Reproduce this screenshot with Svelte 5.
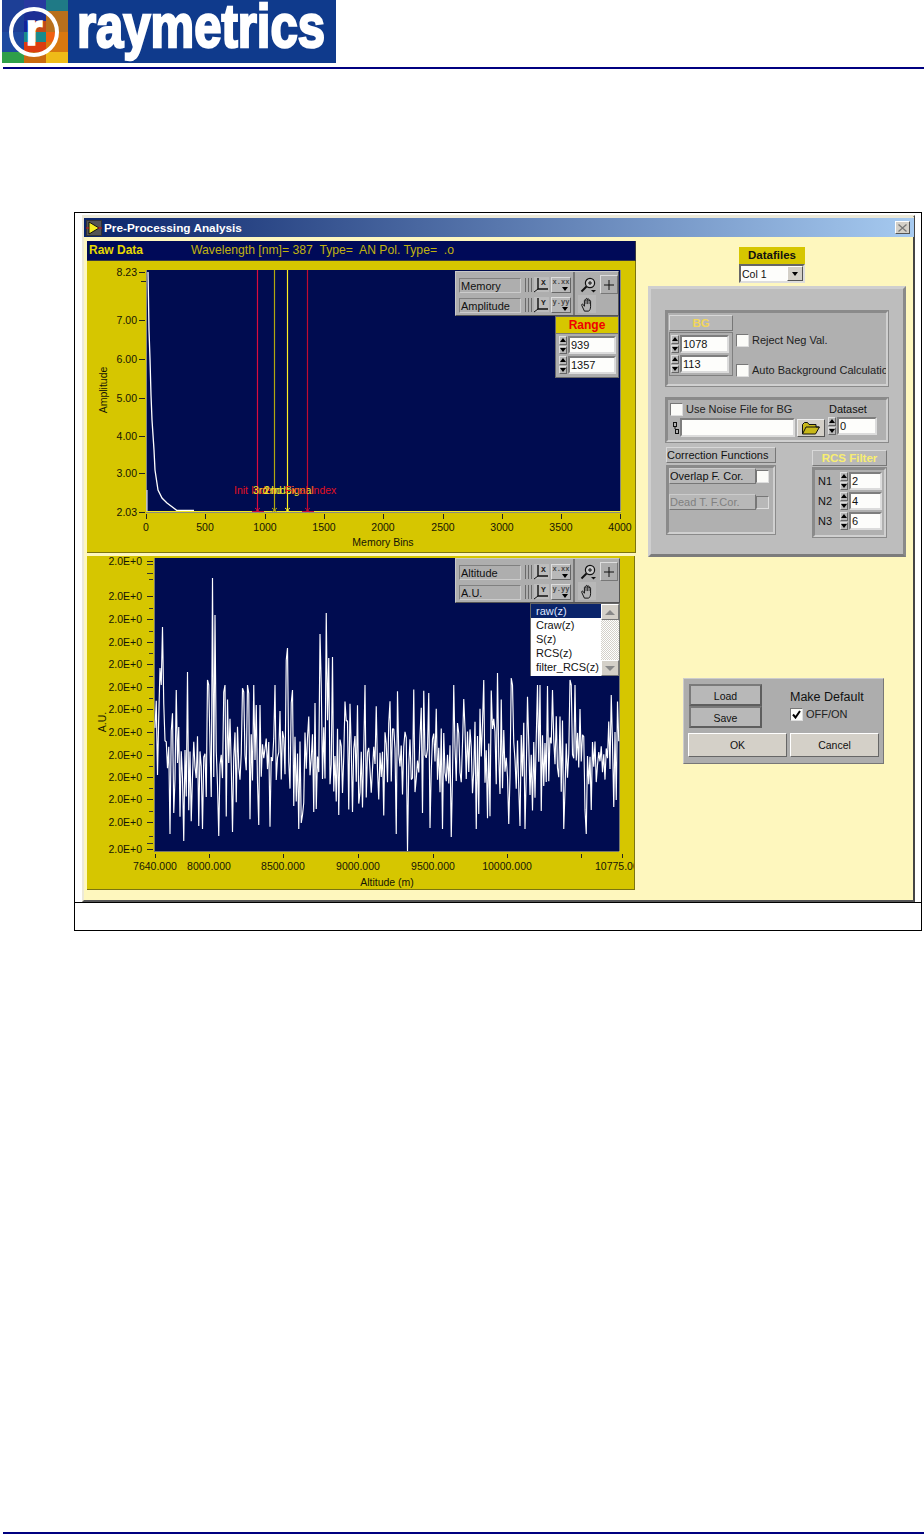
<script>
  // seeded so the noise trace is the same on every load
  function prng(seed) {
    let a = seed;
    return () => {
      a = (a + 0x6d2b79f5) | 0;
      let t = Math.imul(a ^ (a >>> 15), 1 | a);
      t = (t + Math.imul(t ^ (t >>> 7), 61 | t)) ^ t;
      return ((t ^ (t >>> 14)) >>> 0) / 4294967296;
    };
  }

  const logoTiles = [
    [2, 0, '#1d3f96'], [24, 0, '#27399f'], [46, 0, '#1f7a86'],
    [2, 11, '#1d3f96'], [24, 11, '#1c2f94'], [46, 11, '#b9701c'],
    [2, 32, '#1e4aa0'], [24, 32, '#1a8a8a'], [46, 32, '#d8780f'],
    [2, 52, '#2f9f4a'], [24, 52, '#c96a10'], [46, 52, '#efbb18']
  ];

  const plot1Y = [
    ['8.23', 272], ['7.00', 320], ['6.00', 359], ['5.00', 398], ['4.00', 436], ['3.00', 473], ['2.03', 512]
  ];
  const plot1X = [
    ['0', 146], ['500', 205], ['1000', 265], ['1500', 324], ['2000', 383],
    ['2500', 443], ['3000', 502], ['3500', 561], ['4000', 620]
  ];
  const cursors = [
    [257, '#d80c3c'], [274, '#b0a810'], [287, '#fff020'], [307, '#c00a30']
  ];
  const cursorLabels = [
    ['Init Index', 234, '#e01020'], ['3rd Index', 253, '#f4e820'],
    ['2nd Signal', 264, '#f4e820'], ['Final Index', 285, '#e01020']
  ];

  const plot2Y = [561, 596, 619, 642, 664, 687, 709, 732, 755, 777, 799, 822, 849];
  const plot2X = [
    ['7640.000', 155], ['8000.000', 209], ['8500.000', 283], ['9000.000', 358],
    ['9500.000', 433], ['10000.000', 507], ['', 581], ['10775.000', 622]
  ];

  // [x, y] of the tall excursions read off the reference, the rest is noise
  const spikes = [
    [163, 627], [160, 668], [170, 834], [176, 690], [184, 841], [187, 672], [199, 826], [203, 829],
    [207, 680], [212, 578], [213, 561], [215, 615], [219, 836], [224, 692], [233, 832], [244, 692],
    [259, 825], [286, 660], [288, 648], [293, 690], [301, 823], [303, 815], [320, 634], [326, 613],
    [329, 658], [333, 657], [339, 815], [353, 812], [396, 834], [407, 851], [430, 828], [451, 837],
    [464, 699], [484, 680], [497, 673], [509, 824], [520, 826], [511, 678], [553, 690], [586, 834],
    [570, 680], [611, 695], [616, 800]
  ];

  const rand = prng(48271);
  const trace2 = [];
  let side = 1;
  for (let x = 155; x < 619; x += 1.25) {
    const hit = spikes.find((s) => Math.abs(s[0] - x) < 0.65);
    // the signal flips around its mean nearly every sample, with long tails
    side = rand() < 0.75 ? -side : side;
    const y = 757 + side * Math.min(-Math.log(1 - rand() * 0.96) * 30, 72);
    trace2.push(`${x.toFixed(2)},${(hit ? hit[1] : y).toFixed(1)}`);
  }

  // steep decay of the raw signal on the memory-bins plot
  const trace1 = '148,272 148.500,300 149,330 150,359 151,395 152,420 154,450 155,470 158,490 162,498 167,503 177,510.500 194,510.500';
</script>

{#snippet spinner()}
  <span class="spinner">
    <span class="arrow"><i class="up"></i></span>
    <span class="arrow"><i class="down"></i></span>
  </span>
{/snippet}

{#snippet numeric(value, width)}
  <span class="numeric">
    {@render spinner()}
    <span class="field" style="width: {width}px">{value}</span>
  </span>
{/snippet}

{#snippet scaleIcon(letter)}
  <svg class="scale-icon" width="26" height="16" viewBox="0 0 26 16">
    <path d="M1.500 1v14M4.500 1v14M7.500 1v14" stroke="#6a6a6a" fill="none" />
    <rect x="10" y="0" width="15" height="15" fill="#bcbcbc" />
    <path d="M14 1v11h10" stroke="#111" stroke-width="1.400" fill="none" />
    <path d="M14 12l-4 3" stroke="#111" fill="none" />
    <text x="17" y="8" class="tiny">{letter}</text>
  </svg>
{/snippet}

{#snippet palette(top, bottom, fmt1, fmt2)}
  <div class="palette">
    <div class="scales">
      <div class="scale-row">
        <span class="scale-name">{top}</span>
        {@render scaleIcon('X')}
        <span class="fmt">{fmt1}<i class="down"></i></span>
      </div>
      <div class="scale-row">
        <span class="scale-name">{bottom}</span>
        {@render scaleIcon('Y')}
        <span class="fmt">{fmt2}<i class="down"></i></span>
      </div>
    </div>
    <div class="tools">
      <span class="tool">
        <svg width="17" height="16" viewBox="0 0 17 16">
          <circle cx="10" cy="6" r="4.600" fill="#c8c8c8" stroke="#111" stroke-width="1.200" />
          <path d="M8 6h4M10 4v4" stroke="#111" />
          <path d="M6.500 9.500L1.500 14.500" stroke="#111" stroke-width="2" />
          <path d="M11 13h5l-2.500 2.500z" fill="#111" />
        </svg>
      </span>
      <span class="tool raised">
        <svg width="12" height="12" viewBox="0 0 12 12"><path d="M6 1v10M1 6h10" stroke="#111" /></svg>
      </span>
      <span class="tool boxed">
        <svg width="15" height="15" viewBox="0 0 17 17">
          <path d="M5 16L2 9.500c-.6-1.400 1-2 1.800-.8L5 10.500V4c0-1.200 1.600-1.200 1.700 0V2.500c0-1.200 1.700-1.200 1.800 0V3c0-1.200 1.700-1.200 1.800 0v1.500c.1-1.100 1.700-1 1.700.2V11c0 2-1 5-2.500 5z" fill="#b4b4b4" stroke="#111" stroke-width="1.100" />
          <path d="M6.800 4v4M8.500 3v5M10.300 3.500V8" stroke="#111" stroke-width="0.800" />
        </svg>
      </span>
    </div>
  </div>
{/snippet}

<div class="page">
  <header class="logo-row">
    <svg class="logo" width="334" height="63" viewBox="0 0 334 63">
      <rect width="334" height="63" fill="#0f3a8c" />
      <g transform="translate(-2 0)">
        {#each logoTiles as [x, y, fill]}
          <rect {x} {y} width="22" height={y === 0 ? 11 : y === 52 ? 11 : y === 11 ? 21 : 20} {fill} />
        {/each}
        <rect x="24" y="21" width="11" height="11" fill="#12249a" />
        <rect x="35" y="21" width="11" height="11" fill="#c24a18" />
        <rect x="24" y="42" width="22" height="10" fill="#dc3c10" />
        <rect x="46" y="32" width="11" height="10" fill="#f0600f" />
        <circle cx="34" cy="32" r="23" fill="none" stroke="#fff" stroke-width="4" />
      </g>
      <text x="32" y="45" text-anchor="middle" class="logo-r">r</text>
      <text x="75" y="47" textLength="248" lengthAdjust="spacingAndGlyphs" class="logo-word">raymetrics</text>
    </svg>
  </header>
  <div class="rule"></div>

  <figure class="frame">
    <div class="window">
      <div class="titlebar">
        <svg class="vi-icon" width="16" height="16" viewBox="0 0 16 16">
          <rect width="16" height="16" fill="#333" />
          <rect x="1" y="1" width="14" height="14" fill="#555" />
          <path d="M3 2l10 6-10 6z" fill="#f4ee20" stroke="#111" />
          <path d="M0 8h3M12 8h4" stroke="#d01010" />
        </svg>
        <span class="title">Pre-Processing Analysis</span>
        <span class="close">
          <svg width="9" height="8" viewBox="0 0 9 8"><path d="M0.500 0.500l8 7M8.500 0.500l-8 7" stroke="#777" stroke-width="1.300" /></svg>
        </span>
      </div>

      <div class="body">
        <div class="plots">
          <div class="raw-bar">
            <b>Raw Data</b>
            <span class="raw-info">Wavelength [nm]= 387&nbsp; Type=&nbsp; AN Pol. Type=&nbsp; .o</span>
          </div>

          <div class="plot plot-one">
            <svg width="549" height="292" viewBox="87 261 549 292">
              <rect x="146" y="270" width="475" height="242" fill="#000c50" />
              <path d="M146.500 270v242M146 512.500h475M620.500 270v242" stroke="#8a8a80" fill="none" />
              {#each plot1Y as [label, y]}
                <text x="137" y={y + 4} text-anchor="end" class="axis">{label}</text>
                <path d="M139 {y}.5h6" stroke="#222" />
              {/each}
              <path d="M141 281.500h5" stroke="#222" />
              {#each plot1X as [label, x]}
                <text {x} y="531" text-anchor="middle" class="axis">{label}</text>
                <path d="M{x + 0.5} 514v5" stroke="#222" />
              {/each}
              <text x="383" y="546" text-anchor="middle" class="axis">Memory Bins</text>
              <text transform="translate(107 390) rotate(-90)" text-anchor="middle" class="axis">Amplitude</text>

              <polyline points={trace1} fill="none" stroke="#fff" stroke-width="1.300" />
              <path d="M147 512V490" stroke="#fff" />
              <path d="M146 511.500h475" stroke="#f0e820" />
              {#each cursors as [x, color]}
                <path d="M{x + 0.5} 270v242" stroke={color} stroke-width="1.200" />
                <path d="M{x - 2} 508l5 4M{x + 3} 508l-5 4" stroke={color} />
              {/each}
              <path d="M252 511.500h12M302 511.500h12" stroke="#c8103c" />
              {#each cursorLabels as [label, x, color]}
                <text {x} y="494" fill={color} class="cursor">{label}</text>
              {/each}
            </svg>
            {@render palette('Memory', 'Amplitude', 'x.xx', 'y.yy')}
            <div class="range">
              <div class="range-label">Range</div>
              <div class="range-values">
                {@render numeric('939', 49)}
                {@render numeric('1357', 49)}
              </div>
            </div>
          </div>

          <div class="plot plot-two">
            <svg width="547" height="334" viewBox="87 556 547 334">
              <rect x="154" y="558" width="465" height="293" fill="#000c50" />
              <path d="M154.500 558v293M154 851.500h465M619.500 558v293" stroke="#77786e" fill="none" />
              {#each plot2Y as y, i}
                <text x="142" y={y + 4} text-anchor="end" class="axis">2.0E+0</text>
                <path d="M147 {y}.5h6" stroke="#222" />
                {#if i < plot2Y.length - 1}
                  <path d="M149 {Math.round((y + plot2Y[i + 1]) / 2)}.5h4" stroke="#333" />
                {/if}
              {/each}
              <path d="M147 564.500h6M147 573.500h6M147 843.500h6" stroke="#333" />
              {#each plot2X as [label, x]}
                {#if label}
                  <text {x} y="870" text-anchor={x > 600 ? 'start' : 'middle'} dx={x > 600 ? -27 : 0} class="axis">{label}</text>
                {/if}
                <path d="M{x + 0.5} 854v4" stroke="#222" />
              {/each}
              <text x="387" y="886" text-anchor="middle" class="axis">Altitude (m)</text>
              <text transform="translate(106 722) rotate(-90)" text-anchor="middle" class="axis">A.U.</text>
              <polyline points={trace2.join(' ')} fill="none" stroke="#fff" stroke-width="1.150" stroke-linejoin="bevel" />
            </svg>
            {@render palette('Altitude', 'A.U.', 'x.xx', 'y.yy')}
            <div class="listbox">
              <ul>
                <li class="selected">raw(z)</li>
                <li>Craw(z)</li>
                <li>S(z)</li>
                <li>RCS(z)</li>
                <li>filter_RCS(z)</li>
              </ul>
              <div class="scrollbar">
                <span class="sb-btn"><i class="up grey"></i></span>
                <span class="sb-track"></span>
                <span class="sb-btn"><i class="down grey"></i></span>
              </div>
            </div>
          </div>
        </div>

        <div class="side">
          <div class="datafiles">
            <div class="df-label">Datafiles</div>
            <div class="dropdown">
              <span>Col 1</span>
              <span class="dd-btn"><i class="down"></i></span>
            </div>
          </div>

          <div class="panel">
            <div class="cluster bg-cluster">
              <div class="bg-left">
                <div class="head bg-head">BG</div>
                <div class="stack bg-values">
                  {@render numeric('1078', 49)}
                  {@render numeric('113', 49)}
                </div>
              </div>
              <div class="bg-right">
                <label class="check"><span class="box"></span>Reject Neg Val.</label>
                <label class="check"><span class="box"></span>Auto Background Calculation</label>
              </div>
            </div>

            <div class="cluster noise-cluster">
              <div class="noise-left">
                <label class="check"><span class="box"></span>Use Noise File for BG</label>
                <div class="path-row">
                  <svg width="8" height="16" viewBox="0 0 8 16">
                    <rect x="1.500" y="2.500" width="3" height="4" fill="none" stroke="#111" />
                    <rect x="3.500" y="9.500" width="3" height="4" fill="none" stroke="#111" />
                    <path d="M3 6v3" stroke="#111" />
                  </svg>
                  <span class="field path-field"></span>
                  <span class="folder-btn">
                    <svg width="20" height="14" viewBox="0 0 20 14">
                      <path d="M1.500 3.500V13h13l4-7H15V3.500H8L6.500 1.500h-3z" fill="#c8b818" stroke="#111" />
                      <path d="M1.500 13l3.500-7h13" fill="none" stroke="#111" />
                    </svg>
                  </span>
                </div>
              </div>
              <div class="noise-right">
                <span class="dataset">Dataset</span>
                {@render numeric('0', 40)}
              </div>
            </div>

            <div class="bottom-row">
              <div class="corrections">
                <div class="head corr-head">Correction Functions</div>
                <div class="cluster corr-cluster">
                  <div class="bool">
                    <span class="bool-name">Overlap F. Cor.</span><span class="box"></span>
                  </div>
                  <div class="bool off">
                    <span class="bool-name">Dead T. F.Cor.</span><span class="box"></span>
                  </div>
                </div>
              </div>
              <div class="rcs">
                <div class="head rcs-head">RCS Filter</div>
                <div class="cluster rcs-cluster">
                  {#each [['N1', 2], ['N2', 4], ['N3', 6]] as [name, value]}
                    <div class="rcs-row">
                      <span class="rcs-name">{name}</span>
                      {@render numeric(value, 33)}
                    </div>
                  {/each}
                </div>
              </div>
            </div>
          </div>

          <div class="dialog">
            <div class="dialog-top">
              <div class="load-save">
                <button>Load</button>
                <button>Save</button>
              </div>
              <div class="default">
                <span>Make Default</span>
                <label class="check"><span class="box checked">
                  <svg width="9" height="9" viewBox="0 0 9 9"><path d="M1 4.500l2.500 3L8 1" fill="none" stroke="#000" stroke-width="2" /></svg>
                </span>OFF/ON</label>
              </div>
            </div>
            <div class="dialog-actions">
              <button class="plain ok">OK</button>
              <button class="plain cancel">Cancel</button>
            </div>
          </div>
        </div>
      </div>
    </div>
    <figcaption></figcaption>
  </figure>

  <div class="rule foot"></div>
</div>

<style>
  :global(body) {
    margin: 0;
    background: #fff;
  }

  .page {
    height: 1535px;
    display: flex;
    flex-direction: column;
    font-family: "Liberation Sans", Arial, sans-serif;
    font-size: 10.5px;
    color: #111;
    overflow: hidden;
  }

  .logo-row {
    padding-left: 2px;
    height: 63px;
  }

  .logo {
    display: block;
  }

  .logo-r {
    font: 900 44px "Liberation Sans", sans-serif;
    fill: #fff;
    stroke: #fff;
    stroke-width: 1.5px;
  }

  .logo-word {
    font: 700 62px "Liberation Sans", sans-serif;
    fill: #fff;
    stroke: #fff;
    stroke-width: 2.5px;
  }

  .rule {
    height: 2px;
    margin: 4px 0 0 3px;
    background: #000080;
  }

  .rule.foot {
    margin: auto 0 1px 3px;
  }

  .frame {
    margin: 143px 0 0 74px;
    width: 848px;
    height: 719px;
    box-sizing: border-box;
    border: 1px solid #000;
    display: flex;
    flex-direction: column;
  }

  figcaption {
    flex: 1;
    border-top: 1px solid #000;
  }

  .window {
    margin: 2px 6px 0 7px;
    height: 687px;
    box-sizing: border-box;
    border: 2px solid;
    border-color: #ece9d8 #444 #555 #ece9d8;
    background: #fef7be;
    display: flex;
    flex-direction: column;
  }

  .titlebar {
    height: 19px;
    display: flex;
    align-items: center;
    gap: 2px;
    padding: 0 4px 0 2px;
    margin-right: -1px;
    background: linear-gradient(90deg, #0a246a, #a6caf0);
    border-top: 1px solid #ece9d8;
  }

  .title {
    flex: 1;
    color: #fff;
    font: 700 11.800px "Liberation Sans", sans-serif;
  }

  .close {
    width: 15px;
    height: 13px;
    display: flex;
    align-items: center;
    justify-content: center;
    background: #d4d0c8;
    border: 1px solid;
    border-color: #fff #555 #555 #fff;
    box-sizing: border-box;
  }

  .body {
    flex: 1;
    display: flex;
    padding: 4px 0 0 3px;
  }

  .plots {
    width: 549px;
    flex: none;
  }

  .raw-bar {
    height: 20px;
    box-sizing: border-box;
    padding: 3px 2px;
    display: flex;
    background: #000a58;
    color: #e6d800;
    border: 1px solid #3a3a40;
    border-width: 0 1px 1px 0;
    line-height: 13px;
    font-size: 12px;
  }

  .raw-bar b {
    width: 102px;
  }

  .raw-info {
    color: #c0b210;
    white-space: pre;
    font-size: 12.200px;
  }

  .plot {
    position: relative;
    background: #d6c600;
    border-bottom: 1px solid #7c7410;
    border-right: 1px solid #7c7410;
    box-sizing: border-box;
  }

  .plot svg {
    display: block;
  }

  .plot-one {
    height: 292px;
    margin-bottom: 3px;
  }

  .plot-two {
    height: 334px;
    width: 548px;
  }

  .axis {
    font: 10.5px "Liberation Sans", sans-serif;
    fill: #151505;
  }

  .cursor {
    font: 10.5px "Liberation Sans", sans-serif;
  }

  .palette {
    position: absolute;
    right: 16px;
    top: 10px;
    width: 164px;
    height: 45px;
    box-sizing: border-box;
    background: #aeaeae;
    border: 1px solid;
    border-color: #c8c8c8 #555 #555 #c8c8c8;
    display: flex;
  }

  .plot-two .palette {
    top: 2px;
    right: 14px;
    width: 165px;
  }

  .scales {
    width: 119px;
    padding: 3px 0 0 3px;
    box-sizing: border-box;
    border-right: 2px solid #777;
  }

  .scale-row {
    display: flex;
    align-items: center;
    gap: 3px;
    height: 20px;
  }

  .scale-name {
    width: 62px;
    height: 15px;
    line-height: 14px;
    padding-left: 1px;
    box-sizing: border-box;
    border: 1px solid;
    border-color: #808080 #ccc #ccc #808080;
    font-size: 11px;
  }

  .scale-icon {
    flex: none;
  }

  .tiny {
    font: 700 8px "Liberation Mono", monospace;
    fill: #222;
  }

  .fmt {
    position: relative;
    width: 20px;
    height: 16px;
    box-sizing: border-box;
    margin-left: -2px;
    background: #b8b8b8;
    border: 1px solid;
    border-color: #ddd #666 #666 #ddd;
    font: 700 7px/8px "Liberation Mono", monospace;
    color: #444;
    text-align: center;
    overflow: hidden;
    white-space: nowrap;
  }

  .fmt i {
    position: absolute;
    right: 2px;
    bottom: 1px;
  }

  .tools {
    flex: 1;
    display: grid;
    grid-template-columns: 20px 18px;
    grid-auto-rows: 20px;
    gap: 0 2px;
    padding: 3px 0 0 3px;
  }

  .tool {
    display: flex;
    align-items: center;
    justify-content: center;
  }

  .tool.raised {
    height: 17px;
    border: 1px solid;
    border-color: #ddd #777 #777 #ddd;
  }

  .tool.boxed {
    background: #b8b8b8;
    height: 18px;
    width: 18px;
  }

  .range {
    position: absolute;
    right: 16px;
    top: 55px;
    width: 64px;
    box-sizing: border-box;
    background: #aeaeae;
    border: 1px solid #6a6a6a;
  }

  .range-label {
    height: 16px;
    background: #d6c600;
    color: #f00000;
    font-weight: 700;
    font-size: 12px;
    line-height: 16px;
    text-align: center;
    border-bottom: 1px solid #777;
  }

  .range-values {
    padding: 2px 2px 3px 3px;
    display: flex;
    flex-direction: column;
    gap: 2px;
  }

  .numeric {
    display: flex;
    align-items: stretch;
    gap: 1px;
    height: 18px;
  }

  .spinner {
    width: 8px;
    flex: none;
    display: flex;
    flex-direction: column;
    gap: 1px;
  }

  .arrow {
    flex: 1;
    background: #b8b8b8;
    display: flex;
    align-items: center;
    justify-content: center;
    border: 1px solid;
    border-color: #ddd #666 #666 #ddd;
    box-sizing: border-box;
  }

  i.up,
  i.down {
    display: block;
    width: 0;
    height: 0;
    border-left: 3px solid transparent;
    border-right: 3px solid transparent;
  }

  i.up {
    border-bottom: 4px solid #000;
  }

  i.down {
    border-top: 4px solid #000;
  }

  i.grey {
    border-left-width: 5px;
    border-right-width: 5px;
  }

  i.up.grey {
    border-bottom: 5px solid #888;
  }

  i.down.grey {
    border-top: 5px solid #888;
  }

  .field {
    display: block;
    background: #fdfdfb;
    box-sizing: border-box;
    border: 2px solid;
    border-color: #7e7e7e #dcdcdc #dcdcdc #7e7e7e;
    padding-left: 1px;
    line-height: 14px;
    font-size: 11px;
  }

  .listbox {
    position: absolute;
    left: 443px;
    top: 47px;
    width: 89px;
    height: 73px;
    display: flex;
    background: #fff;
    box-sizing: border-box;
    border: 1px solid #666;
    border-width: 1px 0 0 1px;
  }

  .listbox ul {
    flex: 1;
    margin: 0;
    padding: 0;
    list-style: none;
    font-size: 11px;
    line-height: 14px;
  }

  .listbox li {
    padding-left: 5px;
    white-space: nowrap;
  }

  .listbox li.selected {
    background: #0a246a;
    color: #dfe6ff;
  }

  .scrollbar {
    width: 18px;
    flex: none;
    display: flex;
    flex-direction: column;
    background: repeating-conic-gradient(#d4d0c8 0 25%, #fff 0 50%) 0 0 / 2px 2px;
  }

  .sb-btn {
    height: 16px;
    background: #d4d0c8;
    border: 1px solid;
    border-color: #fff #777 #777 #fff;
    display: flex;
    align-items: center;
    justify-content: center;
    box-sizing: border-box;
  }

  .sb-track {
    flex: 1;
  }

  .side {
    width: 276px;
    flex: none;
  }

  .datafiles {
    width: 66px;
    margin: 6px 0 0 103px;
  }

  .df-label {
    height: 17px;
    background: #d6c600;
    font: 700 11.500px/17px "Liberation Sans", sans-serif;
    color: #111;
    text-align: center;
  }

  .dropdown {
    height: 19px;
    display: flex;
    align-items: center;
    justify-content: space-between;
    background: #fdfdfb;
    box-sizing: border-box;
    border: 2px solid;
    border-color: #666 #ddd #ddd #666;
    padding-left: 1px;
  }

  .dd-btn {
    width: 16px;
    height: 15px;
    background: #d4d0c8;
    display: flex;
    align-items: center;
    justify-content: center;
    border: 1px solid;
    border-color: #fff #555 #555 #fff;
    box-sizing: border-box;
  }

  .panel {
    margin: 3px 0 0 12px;
    width: 258px;
    height: 271px;
    box-sizing: border-box;
    padding: 21px 0 0 14px;
    background: #bdbdbd;
    border: 3px solid;
    border-color: #cfcfcf #8a8a8a #7c7c7c #cfcfcf;
  }

  .cluster {
    background: #b0b0b0;
    box-sizing: border-box;
    border: 3px solid;
    border-color: #8a8a8a #d0d0d0 #d0d0d0 #8a8a8a;
    outline: 1px solid #8a8a8a;
    outline-offset: -1px;
  }

  .bg-cluster {
    width: 224px;
    height: 77px;
    display: flex;
    padding: 2px 0 0 1px;
  }

  .head {
    box-sizing: border-box;
    height: 16px;
    text-align: center;
    background: #b8b8b8;
    border: 1px solid;
    border-color: #d8d8d8 #777 #777 #d8d8d8;
    line-height: 14px;
  }

  .bg-left {
    width: 64px;
    flex: none;
  }

  .bg-head {
    color: #f2d65a;
    font-weight: 700;
    font-size: 11.500px;
  }

  .stack {
    display: flex;
    flex-direction: column;
    gap: 2px;
  }

  .bg-values {
    margin-top: 1px;
    padding: 2px 1px;
    border: 1px solid #808080;
  }

  .bg-right {
    flex: 1;
    min-width: 0;
    padding: 18px 0 0 3px;
    display: flex;
    flex-direction: column;
    gap: 16px;
    overflow: hidden;
  }

  .check {
    display: flex;
    align-items: center;
    gap: 3px;
    white-space: nowrap;
    height: 14px;
    color: #222;
    font-size: 11px;
  }

  .box {
    width: 13px;
    height: 13px;
    flex: none;
    box-sizing: border-box;
    background: #fbfbf8;
    border: 1px solid;
    border-color: #777 #ddd #ddd #777;
    display: flex;
    align-items: center;
    justify-content: center;
  }

  .noise-cluster {
    margin-top: 10px;
    width: 224px;
    height: 46px;
    display: flex;
    padding: 2px 0 0 2px;
  }

  .noise-left {
    width: 156px;
  }

  .path-row {
    margin-top: 2px;
    padding-left: 2px;
    display: flex;
    align-items: center;
    height: 19px;
  }

  .path-field {
    width: 115px;
    height: 19px;
  }

  .folder-btn {
    margin-left: 2px;
    width: 28px;
    height: 18px;
    flex: none;
    display: flex;
    align-items: center;
    justify-content: center;
    background: #d4d0c8;
    border: 1px solid;
    border-color: #eee #555 #555 #eee;
    box-sizing: border-box;
  }

  .noise-right {
    margin-left: 2px;
    width: 50px;
  }

  .dataset {
    display: block;
    height: 15px;
    padding-left: 1px;
    line-height: 15px;
    font-size: 11px;
  }

  .bottom-row {
    margin: 4px 0 0 1px;
    display: flex;
  }

  .corrections {
    width: 110px;
  }

  .corr-head {
    height: 16px;
    white-space: nowrap;
    text-align: left;
    padding-left: 0;
    font-size: 11px;
    margin-bottom: 2px;
  }

  .corr-cluster {
    height: 70px;
  }

  .bool {
    display: flex;
    align-items: center;
    height: 16px;
    margin-bottom: 10px;
  }

  .bool-name {
    width: 87px;
    height: 16px;
    line-height: 15px;
    box-sizing: border-box;
    font-size: 11px;
    background: #b8b8b8;
    border: 1px solid;
    border-color: #ccc #777 #777 #ccc;
    white-space: nowrap;
    overflow: hidden;
  }

  .bool.off {
    color: #808080;
  }

  .bool.off .box {
    background: #b8b8b8;
  }

  .rcs {
    margin: 3px 0 0 36px;
    width: 75px;
  }

  .rcs-head {
    color: #f8ee70;
    font-weight: 700;
    font-size: 11.500px;
    margin-bottom: 1px;
  }

  .rcs-cluster {
    height: 71px;
    padding: 2px 0 0 3px;
    display: flex;
    flex-direction: column;
    gap: 2px;
  }

  .rcs-row {
    display: flex;
    align-items: center;
    gap: 9px;
  }

  .rcs-name {
    width: 13px;
    font-size: 11px;
  }

  .dialog {
    margin: 121px 0 0 47px;
    width: 201px;
    height: 86px;
    box-sizing: border-box;
    background: #adadad;
    border: 1px solid;
    border-color: #ccc #777 #777 #ccc;
    padding: 5px 4px;
  }

  .dialog-top {
    display: flex;
    height: 49px;
  }

  .load-save {
    width: 73px;
    margin-left: 1px;
    display: flex;
    flex-direction: column;
  }

  button {
    font: 10.5px "Liberation Sans", sans-serif;
    color: #111;
    padding: 0;
    box-sizing: border-box;
  }

  .load-save button {
    height: 22px;
    padding-top: 2px;
    background: #b8b8b8;
    border: 2px solid;
    border-color: #7a7a7a #5e5e5e #5e5e5e #7a7a7a;
  }

  .default {
    margin: 6px 0 0 28px;
    display: flex;
    flex-direction: column;
    gap: 3px;
    font-size: 12.500px;
    line-height: 14px;
  }

  .dialog-actions {
    display: flex;
    gap: 3px;
  }

  .plain {
    height: 24px;
    background: #d4d0c8;
    border: 1px solid;
    border-color: #fff #666 #666 #fff;
  }

  .ok {
    width: 99px;
  }

  .cancel {
    width: 89px;
  }
</style>
